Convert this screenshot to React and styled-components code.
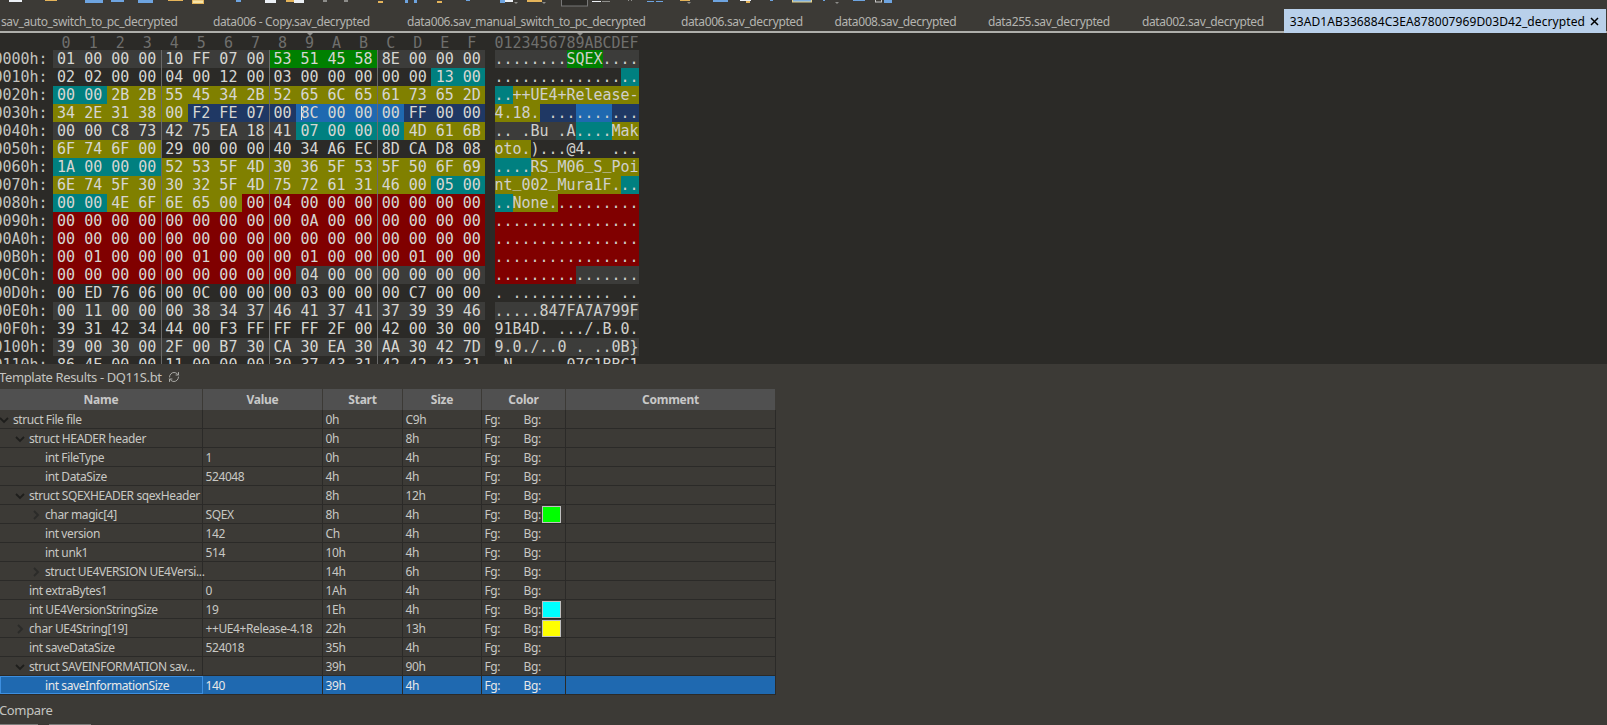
import React from 'react'
import styled, { createGlobalStyle } from 'styled-components'
import { RefreshCw } from 'lucide-react'

const SANS = '"Noto Sans", "Open Sans", sans-serif'
const MONO = '"DejaVu Sans Mono", monospace'

const MARKS = {
  G: '#008000',
  T: '#008080',
  O: '#808000',
  N: '#1f3864',
  L: '#1f69b0',
  R: '#800000',
}

const GlobalStyle = createGlobalStyle`
  html, body {
    margin: 0;
    height: 100%;
    overflow: hidden;
    background: #3c3a36;
  }
`

const Page = styled.div`
  width: 1607px;
  height: 725px;
  display: flex;
  flex-direction: column;
  overflow: hidden;
  background: #3c3a36;
  font-family: ${SANS};
`

const Toolbar = styled.div`
  height: 9px;
  flex: none;
  overflow: hidden;
  line-height: 0;
`

const TabBar = styled.div`
  height: 24px;
  flex: none;
  display: flex;
  box-sizing: border-box;
  border-bottom: 2px solid #aeaeaa;
`

const Tab = styled.div`
  display: flex;
  align-items: center;
  flex: none;
  width: ${p => p.$width}px;
  height: 22px;
  box-sizing: border-box;
  padding: ${p => (p.$first ? '2px 0 0 1px' : '2px 0 0 18px')};
  font-size: 12px;
  letter-spacing: -0.38px;
  white-space: nowrap;
  color: #b4b4b0;
`

const ActiveTab = styled.div`
  display: flex;
  align-items: center;
  gap: 4px;
  height: 24px;
  box-sizing: border-box;
  padding: 1px 6px 0;
  margin-left: auto;
  margin-right: 1px;
  font-size: 12px;
  letter-spacing: 0.09px;
  white-space: nowrap;
  color: #000;
  background: #b9d0ea;
`

const HexArea = styled.div`
  height: 331px;
  flex: none;
  overflow: hidden;
  background: #2b2a27;
  font-family: ${MONO};
  font-size: 15px;
`

const HexRow = styled.div`
  display: flex;
  height: ${p => (p.$head ? 17 : 18)}px;
  line-height: ${p => (p.$head ? 21 : 19)}px;
`

const Address = styled.div`
  width: 47.6px;
  margin-right: 5px;
  flex: none;
  display: flex;
  justify-content: flex-end;
  color: #c4c4c0;
`

const ByteCell = styled.div`
  position: relative;
  width: 27.05px;
  flex: none;
  text-align: center;
  color: ${p => (p.$head ? '#6f6f6d' : '#d6d6d2')};
  background: ${p => MARKS[p.$mark] || (p.$alt ? '#3c3c3a' : 'transparent')};
  box-shadow: ${p => (p.$group && !p.$head ? 'inset 1px 0 0 #6a6a6a' : 'none')};
`

const AsciiBlock = styled.div`
  display: flex;
  margin-left: 9.2px;
`

// DejaVu's underscore sinks into the next row, Liberation's stays inside the cell
const AsciiCell = styled.div`
  position: relative;
  width: 9px;
  flex: none;
  text-align: center;
  white-space: pre;
  font-family: ${p => (p.$underscore ? '"Liberation Mono", monospace' : 'inherit')};
  color: ${p => (p.$head ? '#6f6f6d' : '#d0d0cc')};
  background: ${p => MARKS[p.$mark] || (p.$alt ? '#3c3c3a' : 'transparent')};
`

const ColumnMarker = styled.span`
  position: absolute;
  top: 0;
  left: 50%;
  margin-left: -3px;
  border: 3px solid transparent;
  border-top-color: #8a8a88;
  border-bottom: 0;
`

const Caret = styled.span`
  position: absolute;
  top: 2px;
  bottom: 2px;
  left: 5px;
  width: 1px;
  background: #e4e4e4;
`

const PanelTitle = styled.div`
  height: 25px;
  flex: none;
  display: flex;
  align-items: center;
  gap: 6px;
  margin-left: -1px;
  font-size: 13px;
  letter-spacing: -0.37px;
  color: #c4c4c0;
`

const Table = styled.div`
  width: 776px;
  flex: none;
`

const TableRow = styled.div`
  display: grid;
  grid-template-columns: 203px 120px 80px 79px 84px 210px;
  height: ${p => (p.$head ? 21 : 19)}px;
  box-sizing: border-box;
  background: ${p => (p.$head ? '#505050' : p.$selected ? '#1f69b0' : 'transparent')};
  border-bottom: ${p => (p.$head ? 0 : '1px solid #2b2a28')};
`

const HeaderCell = styled.div`
  display: flex;
  align-items: center;
  justify-content: center;
  font-size: 12px;
  font-weight: 700;
  letter-spacing: -0.25px;
  color: #c8c8c8;
  border-right: 1px solid #3c3a36;
`

const Cell = styled.div`
  display: flex;
  align-items: center;
  min-width: 0;
  box-sizing: border-box;
  padding-left: ${p => p.$indent ?? 2.5}px;
  padding-top: 1px;
  font-size: 12px;
  letter-spacing: -0.4px;
  white-space: nowrap;
  color: ${p => (p.$selected ? '#e8e8e8' : '#c8c8c4')};
  border-right: 1px solid #2b2a28;
  outline: ${p => (p.$focus ? '1px solid #3d8fe0' : 'none')};
  outline-offset: -1px;
`

const Chevron = styled.svg`
  width: 10px;
  height: 10px;
  flex: none;
  margin-left: -14px;
  margin-right: 4px;
  fill: none;
  stroke: ${p => (p.$open ? '#1e1e1c' : '#2b2b29')};
  stroke-width: 1.8;
`

const ColorLabel = styled.span`
  width: ${p => p.$width}px;
  flex: none;
`

const Swatch = styled.span`
  width: 19px;
  height: 17px;
  box-sizing: border-box;
  flex: none;
  margin-left: 1px;
  border: 1px solid #c0c0c0;
  background: ${p => p.$color};
`

const CompareTitle = styled.div`
  height: 29px;
  flex: none;
  display: flex;
  align-items: center;
  margin-left: -1px;
  font-size: 13px;
  letter-spacing: -0.37px;
  color: #c4c4c0;
`

const StubRow = styled.div`
  display: flex;
  gap: 11px;
`

const Stub = styled.div`
  width: ${p => p.$width}px;
  height: 2px;
  background: #7c7c7a;
`

const hexRows = [
  ['0000h:', '01 00 00 00 10 FF 07 00 53 51 45 58 8E 00 00 00', '........SQEX....', '........GGGG....'],
  ['0010h:', '02 02 00 00 04 00 12 00 03 00 00 00 00 00 13 00', '................', '..............TT'],
  ['0020h:', '00 00 2B 2B 55 45 34 2B 52 65 6C 65 61 73 65 2D', '..++UE4+Release-', 'TTOOOOOOOOOOOOOO'],
  ['0030h:', '34 2E 31 38 00 F2 FE 07 00 8C 00 00 00 FF 00 00', '4.18. ..........', 'OOOOONNNNLLLLNNN'],
  ['0040h:', '00 00 C8 73 42 75 EA 18 41 07 00 00 00 4D 61 6B', '.. .Bu .A....Mak', '.........TTTTOOO'],
  ['0050h:', '6F 74 6F 00 29 00 00 00 40 34 A6 EC 8D CA D8 08', 'oto.)...@4.  ...', 'OOOO............'],
  ['0060h:', '1A 00 00 00 52 53 5F 4D 30 36 5F 53 5F 50 6F 69', '....RS_M06_S_Poi', 'TTTTOOOOOOOOOOOO'],
  ['0070h:', '6E 74 5F 30 30 32 5F 4D 75 72 61 31 46 00 05 00', 'nt_002_Mura1F...', 'OOOOOOOOOOOOOOTT'],
  ['0080h:', '00 00 4E 6F 6E 65 00 00 04 00 00 00 00 00 00 00', '..None..........', 'TTOOOOORRRRRRRRR'],
  ['0090h:', '00 00 00 00 00 00 00 00 00 0A 00 00 00 00 00 00', '................', 'RRRRRRRRRRRRRRRR'],
  ['00A0h:', '00 00 00 00 00 00 00 00 00 00 00 00 00 00 00 00', '................', 'RRRRRRRRRRRRRRRR'],
  ['00B0h:', '00 01 00 00 00 01 00 00 00 01 00 00 00 01 00 00', '................', 'RRRRRRRRRRRRRRRR'],
  ['00C0h:', '00 00 00 00 00 00 00 00 00 04 00 00 00 00 00 00', '................', 'RRRRRRRRR.......'],
  ['00D0h:', '00 ED 76 06 00 0C 00 00 00 03 00 00 00 C7 00 00', '. ........... ..', '................'],
  ['00E0h:', '00 11 00 00 00 38 34 37 46 41 37 41 37 39 39 46', '.....847FA7A799F', '................'],
  ['00F0h:', '39 31 42 34 44 00 F3 FF FF FF 2F 00 42 00 30 00', '91B4D. .../.B.0.', '................'],
  ['0100h:', '39 00 30 00 2F 00 B7 30 CA 30 EA 30 AA 30 42 7D', '9.0./..0 . ..0B}', '................'],
  ['0110h:', '86 4E 00 00 11 00 00 00 30 37 43 31 42 42 43 31', '.N......07C1BBC1', '................'],
]

const digits = '0123456789ABCDEF'.split('')

const tabs = [
  { name: 'sav_auto_switch_to_pc_decrypted', width: 195 },
  { name: 'data006 - Copy.sav_decrypted', width: 194 },
  { name: 'data006.sav_manual_switch_to_pc_decrypted', width: 274 },
  { name: 'data006.sav_decrypted', width: 153.5 },
  { name: 'data008.sav_decrypted', width: 153.5 },
  { name: 'data255.sav_decrypted', width: 154 },
  { name: 'data002.sav_decrypted', width: 143 },
]

const templateRows = [
  { name: 'struct File file', depth: 0, open: true, value: '', start: '0h', size: 'C9h' },
  { name: 'struct HEADER header', depth: 1, open: true, value: '', start: '0h', size: '8h' },
  { name: 'int FileType', depth: 2, value: '1', start: '0h', size: '4h' },
  { name: 'int DataSize', depth: 2, value: '524048', start: '4h', size: '4h' },
  { name: 'struct SQEXHEADER sqexHeader', depth: 1, open: true, value: '', start: '8h', size: '12h' },
  { name: 'char magic[4]', depth: 2, open: false, value: 'SQEX', start: '8h', size: '4h', bg: '#00ff00' },
  { name: 'int version', depth: 2, value: '142', start: 'Ch', size: '4h' },
  { name: 'int unk1', depth: 2, value: '514', start: '10h', size: '4h' },
  { name: 'struct UE4VERSION UE4Versi...', depth: 2, open: false, value: '', start: '14h', size: '6h' },
  { name: 'int extraBytes1', depth: 1, value: '0', start: '1Ah', size: '4h' },
  { name: 'int UE4VersionStringSize', depth: 1, value: '19', start: '1Eh', size: '4h', bg: '#00ffff' },
  { name: 'char UE4String[19]', depth: 1, open: false, value: '++UE4+Release-4.18', start: '22h', size: '13h', bg: '#ffff00' },
  { name: 'int saveDataSize', depth: 1, value: '524018', start: '35h', size: '4h' },
  { name: 'struct SAVEINFORMATION sav...', depth: 1, open: true, value: '', start: '39h', size: '90h' },
  { name: 'int saveInformationSize', depth: 2, value: '140', start: '39h', size: '4h', selected: true },
]

// only the bottom edge of the toolbar icons is on screen
const ToolbarIcons = () => (
  <svg width="910" height="9" viewBox="0 0 910 9">
    <g fill="#ecf0f5">
      <rect x="9" y="0" width="13" height="2" />
      <rect x="265" y="0" width="11" height="3" />
      <rect x="294" y="0" width="10" height="3" />
      <rect x="505" y="0" width="8" height="2" />
      <rect x="592" y="1" width="9" height="1" />
      <rect x="740" y="0" width="11" height="1" />
    </g>
    <g fill="#e5b45a">
      <rect x="45" y="0" width="12" height="1" />
      <rect x="168" y="0" width="15" height="1" />
      <rect x="286" y="0" width="8" height="2" />
      <rect x="680" y="0" width="10" height="1" />
      <rect x="527" y="0" width="15" height="2" />
      <rect x="746" y="1" width="4" height="2" />
      <rect x="378" y="1" width="5" height="2" />
      <rect x="437" y="1" width="5" height="2" />
    </g>
    <g fill="#6ea4e0">
      <rect x="85" y="0" width="18" height="3" />
      <rect x="111" y="0" width="13" height="2" />
      <rect x="138" y="0" width="15" height="3" />
      <rect x="236" y="0" width="5" height="2" />
      <rect x="405" y="0" width="3" height="3" />
      <rect x="414" y="0" width="3" height="3" />
      <rect x="466" y="0" width="4" height="1" />
      <rect x="500" y="0" width="5" height="3" />
      <rect x="647" y="1" width="7" height="1" />
      <rect x="656" y="1" width="7" height="1" />
      <rect x="713" y="0" width="15" height="2" />
      <rect x="770" y="0" width="3" height="1" />
      <rect x="823" y="0" width="2" height="1" />
      <rect x="853" y="0" width="12" height="1" />
      <rect x="884" y="0" width="8" height="3" />
    </g>
    <rect x="192.5" y="0" width="11" height="3.5" fill="#f5e3a8" stroke="#e5b45a" />
    <rect x="792.5" y="-2" width="19" height="4" fill="#7fb0e0" stroke="#e8d48a" />
    <rect x="561.5" y="-2" width="26" height="8" fill="#2b2a27" stroke="#777" />
    <g fill="#8d8d8a">
      <rect x="323" y="0" width="4" height="2" />
      <rect x="344" y="0" width="4" height="2" />
      <path d="M514 2h4l-2 2zM542 2h4l-2 2zM687 2h4l-2 2zM835 2h4l-2 2z" />
      <rect x="602" y="1" width="8" height="1" />
      <rect x="628" y="0" width="1" height="1" />
      <rect x="631" y="0" width="1" height="1" />
    </g>
    <rect x="875.5" y="-1" width="6" height="3" fill="none" stroke="#c8c8c8" />
  </svg>
)

const TreeChevron = ({ open }) => (
  <Chevron viewBox="0 0 10 10" $open={open}>
    <polyline points={open ? '1,3 5,7 9,3' : '3,1 7,5 3,9'} />
  </Chevron>
)

const App = () => {
  return (
    <Page>
      <GlobalStyle />
      <Toolbar>
        <ToolbarIcons />
      </Toolbar>
      <TabBar>
        {tabs.map((tab, i) => (
          <Tab key={tab.name} $first={i === 0} $width={tab.width}>{tab.name}</Tab>
        ))}
        <ActiveTab>
          33AD1AB336884C3EA878007969D03D42_decrypted
          <svg width="11" height="11" viewBox="0 0 11 11" fill="none" stroke="#000" strokeWidth="1.5">
            <path d="M2 2l7 7M9 2l-7 7" />
          </svg>
        </ActiveTab>
      </TabBar>

      <HexArea>
        <HexRow $head>
          <Address />
          {digits.map((d, i) => (
            <ByteCell key={d} $head>
              {i === 9 && <ColumnMarker />}
              {d}
            </ByteCell>
          ))}
          <AsciiBlock>
            {digits.map((d, i) => (
              <AsciiCell key={d} $head>
                {i === 9 && <ColumnMarker />}
                {d}
              </AsciiCell>
            ))}
          </AsciiBlock>
        </HexRow>
        {hexRows.map(([addr, hex, ascii, marks], r) => (
          <HexRow key={addr}>
            <Address>{addr}</Address>
            {hex.split(' ').map((b, i) => (
              <ByteCell key={i} $mark={marks[i]} $alt={r % 2 === 0} $group={i > 0 && i % 4 === 0}>
                {addr === '0030h:' && i === 9 && <Caret />}
                {b}
              </ByteCell>
            ))}
            <AsciiBlock>
              {ascii.split('').map((c, i) => (
                <AsciiCell key={i} $mark={marks[i]} $alt={r % 2 === 0} $underscore={c === '_'}>{c}</AsciiCell>
              ))}
            </AsciiBlock>
          </HexRow>
        ))}
      </HexArea>

      <PanelTitle>
        Template Results - DQ11S.bt
        <RefreshCw size={12} color="#a8a8a4" />
      </PanelTitle>

      <Table>
        <TableRow $head>
          <HeaderCell>Name</HeaderCell>
          <HeaderCell>Value</HeaderCell>
          <HeaderCell>Start</HeaderCell>
          <HeaderCell>Size</HeaderCell>
          <HeaderCell>Color</HeaderCell>
          <HeaderCell>Comment</HeaderCell>
        </TableRow>
        {templateRows.map(row => (
          <TableRow key={row.name} $selected={row.selected}>
            <Cell $indent={13 + row.depth * 16} $selected={row.selected} $focus={row.selected}>
              {row.open !== undefined && <TreeChevron open={row.open} />}
              {row.name}
            </Cell>
            <Cell $selected={row.selected}>{row.value}</Cell>
            <Cell $selected={row.selected}>{row.start}</Cell>
            <Cell $selected={row.selected}>{row.size}</Cell>
            <Cell $selected={row.selected}>
              <ColorLabel $width={39}>Fg:</ColorLabel>
              <ColorLabel $width={17}>Bg:</ColorLabel>
              {row.bg && <Swatch $color={row.bg} />}
            </Cell>
            <Cell $selected={row.selected} />
          </TableRow>
        ))}
      </Table>

      <CompareTitle>Compare</CompareTitle>
      <StubRow>
        <Stub $width={38} />
        <Stub $width={42} />
      </StubRow>
    </Page>
  )
}

export default App
